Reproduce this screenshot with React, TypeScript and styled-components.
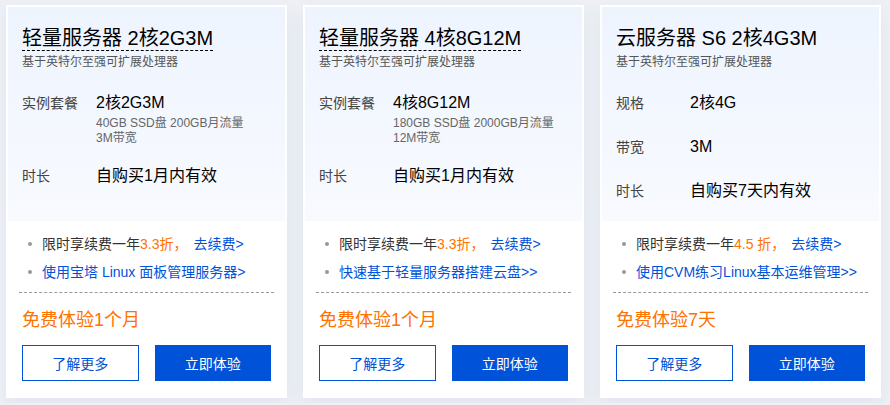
import React from "react";
import styled, { createGlobalStyle } from "styled-components";

const GlobalStyle = createGlobalStyle`
  body {
    margin: 0;
    background: #eef0f5;
    font-family: "Liberation Sans", "Noto Sans CJK SC", sans-serif;
    color: #333;
  }
`;

const Page = styled.div`
  display: flex;
  gap: 16px;
  padding: 5px 6px;
`;

const Card = styled.div`
  width: 281px;
  height: 393px;
  box-sizing: border-box;
  background: #fff;
  padding: 2px;
  display: flex;
  flex-direction: column;
  box-shadow: 0 6px 16px rgba(55, 99, 170, 0.08);
`;

const Top = styled.div`
  height: 214px;
  box-sizing: border-box;
  padding: 19px 14px 0;
  background: linear-gradient(180deg, #eef4fe 0%, #f8fafe 100%);
`;

const Title = styled.h2<{ $dashed?: boolean }>`
  display: inline-block;
  margin: 0;
  font-size: 20px;
  font-weight: normal;
  line-height: 24px;
  color: #000;
  border-bottom: 1px dashed ${(p) => (p.$dashed ? "#000" : "transparent")};
`;

const Subtitle = styled.div`
  margin-top: 3px;
  font-size: 12px;
  line-height: 16px;
  color: #555;
`;

const Specs = styled.div<{ $gap: number }>`
  margin-top: 22px;
  display: flex;
  flex-direction: column;
  gap: ${(p) => p.$gap}px;
`;

const Row = styled.div`
  display: flex;
`;

const Label = styled.div`
  width: 74px;
  flex: none;
  font-size: 14px;
  line-height: 22px;
  color: #444;
`;

const Value = styled.div`
  font-size: 16px;
  line-height: 22px;
  color: #000;
`;

const Note = styled.div`
  margin-top: 2px;
  font-size: 12px;
  line-height: 15px;
  color: #666;
`;

const Bottom = styled.div`
  flex: 1;
  padding: 13px 14px 0;
  display: flex;
  flex-direction: column;
`;

const List = styled.ul`
  list-style: none;
  margin: 0;
  padding: 0;
  display: flex;
  flex-direction: column;
  gap: 8px;
`;

const Item = styled.li`
  position: relative;
  padding-left: 20px;
  font-size: 14px;
  line-height: 20px;
  color: #333;
  white-space: nowrap;

  &::before {
    content: "";
    position: absolute;
    left: 6px;
    top: 8px;
    width: 4px;
    height: 4px;
    border-radius: 50%;
    background: #999;
  }
`;

const Orange = styled.span`
  color: #ff7200;
`;

const Link = styled.a<{ $gap?: number }>`
  color: #0052d9;
  text-decoration: none;
  margin-left: ${(p) => p.$gap ?? 0}px;
`;

const Divider = styled.div`
  margin: 10px -3px 0;
  border-top: 1px dashed #999;
`;

const Free = styled.div`
  margin-top: 14px;
  font-size: 18px;
  line-height: 26px;
  color: #ff7200;
`;

const Buttons = styled.div`
  margin-top: 12px;
  display: grid;
  grid-template-columns: 1fr 1fr;
  gap: 16px;
`;

const Button = styled.button<{ $primary?: boolean }>`
  height: 36px;
  font-family: inherit;
  font-size: 14px;
  cursor: pointer;
  border: 1px solid #0052d9;
  background: ${(p) => (p.$primary ? "#0052d9" : "#fff")};
  color: ${(p) => (p.$primary ? "#fff" : "#0052d9")};
`;

type Spec = { label: string; value: string; notes?: string[] };

type Product = {
  title: string;
  dashed: boolean;
  gap: number;
  specs: Spec[];
  discount: string;
  promo: string;
  free: string;
};

const products: Product[] = [
  {
    title: "轻量服务器 2核2G3M",
    dashed: true,
    gap: 19,
    specs: [
      { label: "实例套餐", value: "2核2G3M", notes: ["40GB SSD盘 200GB月流量", "3M带宽"] },
      { label: "时长", value: "自购买1月内有效" },
    ],
    discount: "3.3折，",
    promo: "使用宝塔 Linux 面板管理服务器>",
    free: "免费体验1个月",
  },
  {
    title: "轻量服务器 4核8G12M",
    dashed: true,
    gap: 19,
    specs: [
      { label: "实例套餐", value: "4核8G12M", notes: ["180GB SSD盘 2000GB月流量", "12M带宽"] },
      { label: "时长", value: "自购买1月内有效" },
    ],
    discount: "3.3折，",
    promo: "快速基于轻量服务器搭建云盘>>",
    free: "免费体验1个月",
  },
  {
    title: "云服务器 S6 2核4G3M",
    dashed: false,
    gap: 22,
    specs: [
      { label: "规格", value: "2核4G" },
      { label: "带宽", value: "3M" },
      { label: "时长", value: "自购买7天内有效" },
    ],
    discount: "4.5 折，",
    promo: "使用CVM练习Linux基本运维管理>>",
    free: "免费体验7天",
  },
];

const ProductCard = ({ p }: { p: Product }) => (
  <Card>
    <Top>
      <Title $dashed={p.dashed}>{p.title}</Title>
      <Subtitle>基于英特尔至强可扩展处理器</Subtitle>
      <Specs $gap={p.gap}>
        {p.specs.map((s) => (
          <Row key={s.label}>
            <Label>{s.label}</Label>
            <div>
              <Value>{s.value}</Value>
              {s.notes && (
                <Note>
                  {s.notes.map((n) => (
                    <div key={n}>{n}</div>
                  ))}
                </Note>
              )}
            </div>
          </Row>
        ))}
      </Specs>
    </Top>
    <Bottom>
      <List>
        <Item>
          限时享续费一年<Orange>{p.discount}</Orange>
          <Link $gap={6} href="#">去续费&gt;</Link>
        </Item>
        <Item>
          <Link href="#">{p.promo}</Link>
        </Item>
      </List>
      <Divider />
      <Free>{p.free}</Free>
      <Buttons>
        <Button>了解更多</Button>
        <Button $primary>立即体验</Button>
      </Buttons>
    </Bottom>
  </Card>
);

export default function App() {
  return (
    <>
      <GlobalStyle />
      <Page>
        {products.map((p) => (
          <ProductCard key={p.title} p={p} />
        ))}
      </Page>
    </>
  );
}
